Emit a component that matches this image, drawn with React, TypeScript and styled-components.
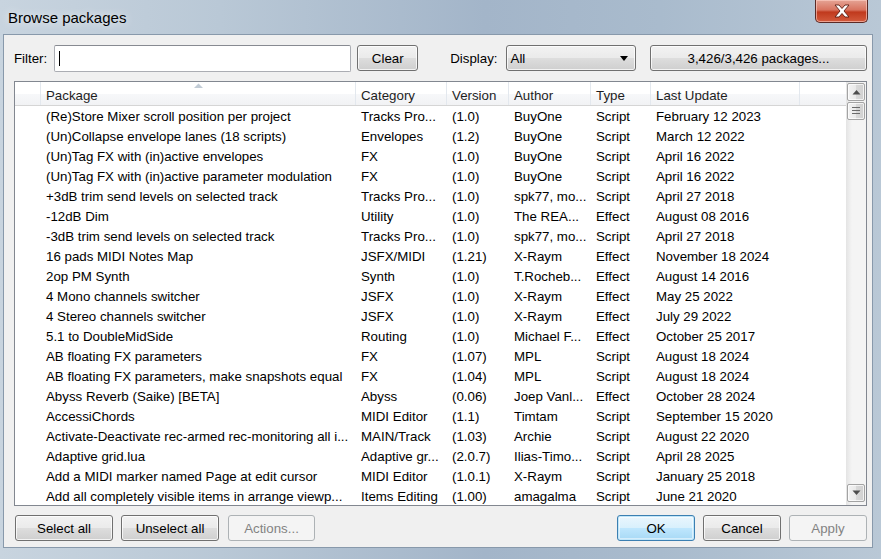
import React from "react";
import styled, { createGlobalStyle, css } from "styled-components";

type Pkg = [string, string, string, string, string, string];

const rows: Pkg[] = [
  ["(Re)Store Mixer scroll position per project", "Tracks Pro...", "(1.0)", "BuyOne", "Script", "February 12 2023"],
  ["(Un)Collapse envelope lanes (18 scripts)", "Envelopes", "(1.2)", "BuyOne", "Script", "March 12 2022"],
  ["(Un)Tag FX with (in)active envelopes", "FX", "(1.0)", "BuyOne", "Script", "April 16 2022"],
  ["(Un)Tag FX with (in)active parameter modulation", "FX", "(1.0)", "BuyOne", "Script", "April 16 2022"],
  ["+3dB trim send levels on selected track", "Tracks Pro...", "(1.0)", "spk77, mo...", "Script", "April 27 2018"],
  ["-12dB Dim", "Utility", "(1.0)", "The REA...", "Effect", "August 08 2016"],
  ["-3dB trim send levels on selected track", "Tracks Pro...", "(1.0)", "spk77, mo...", "Script", "April 27 2018"],
  ["16 pads MIDI Notes Map", "JSFX/MIDI", "(1.21)", "X-Raym", "Effect", "November 18 2024"],
  ["2op PM Synth", "Synth", "(1.0)", "T.Rocheb...", "Effect", "August 14 2016"],
  ["4 Mono channels switcher", "JSFX", "(1.0)", "X-Raym", "Effect", "May 25 2022"],
  ["4 Stereo channels switcher", "JSFX", "(1.0)", "X-Raym", "Effect", "July 29 2022"],
  ["5.1 to DoubleMidSide", "Routing", "(1.0)", "Michael F...", "Effect", "October 25 2017"],
  ["AB floating FX parameters", "FX", "(1.07)", "MPL", "Script", "August 18 2024"],
  ["AB floating FX parameters, make snapshots equal", "FX", "(1.04)", "MPL", "Script", "August 18 2024"],
  ["Abyss Reverb (Saike) [BETA]", "Abyss", "(0.06)", "Joep Vanl...", "Effect", "October 28 2024"],
  ["AccessiChords", "MIDI Editor", "(1.1)", "Timtam", "Script", "September 15 2020"],
  ["Activate-Deactivate rec-armed rec-monitoring all i...", "MAIN/Track", "(1.03)", "Archie", "Script", "August 22 2020"],
  ["Adaptive grid.lua", "Adaptive gr...", "(2.0.7)", "Ilias-Timo...", "Script", "April 28 2025"],
  ["Add a MIDI marker named Page at edit cursor", "MIDI Editor", "(1.0.1)", "X-Raym", "Script", "January 25 2018"],
  ["Add all completely visible items in arrange viewp...", "Items Editing", "(1.00)", "amagalma", "Script", "June 21 2020"],
];

const headers = ["Package", "Category", "Version", "Author", "Type", "Last Update"];
const COLS = "26px 315px 91px 62px 82px 60px 149px 1fr";

const Global = createGlobalStyle`
  html, body { margin: 0; padding: 0; background: #9fb3c8; }
  body { font-family: "Liberation Sans", Arial, sans-serif; font-size: 13px; color: #000; }
`;

const Window = styled.div`
  width: 881px;
  height: 559px;
  display: flex;
  flex-direction: column;
  background: linear-gradient(90deg, #c8d4df 0%, #b9c8d6 25%, #a3b5c9 55%, #a9bbcd 75%, #b9c8d6 100%);
  overflow: hidden;
`;

const TitleBar = styled.div`
  height: 34px;
  flex: none;
  display: flex;
  align-items: flex-start;
  justify-content: space-between;
  padding: 0 13px 0 8px;
  box-sizing: border-box;
`;

const Title = styled.div`
  font-family: "Liberation Sans", Arial, sans-serif;
  font-size: 15px;
  color: #000;
  margin-top: 9px;
  text-shadow: 0 0 8px rgba(255, 255, 255, 0.9);
`;

const CloseBtn = styled.div`
  width: 51px;
  height: 22px;
  border: 1px solid #5b2a25;
  border-top: none;
  border-radius: 0 0 5px 5px;
  background: linear-gradient(180deg, #e5a495 0%, #d8735f 45%, #c0391d 55%, #d35b3d 100%);
  box-shadow: inset 0 0 0 1px rgba(255, 210, 200, 0.6);
  display: flex;
  align-items: center;
  justify-content: center;
`;

const Client = styled.div`
  flex: 1;
  margin: 0 8px 11px 3px;
  background: #f0f0f0;
  border: 1px solid #8899ab;
  display: flex;
  flex-direction: column;
  padding: 9px 5px 0 10px;
  box-sizing: border-box;
`;

const Toolbar = styled.div`
  display: flex;
  align-items: center;
  height: 28px;
`;

const Label = styled.span<{ $ml?: number; $mr?: number }>`
  margin-left: ${(p) => p.$ml ?? 0}px;
  margin-right: ${(p) => p.$mr ?? 5}px;
  font-size: 13.3px;
`;

const TextBox = styled.div`
  width: 297px;
  height: 27px;
  box-sizing: border-box;
  background: #fff;
  border: 1px solid #abadb3;
  border-top-color: #878a91;
  border-radius: 2px;
  display: flex;
  align-items: center;
  padding-left: 4px;
`;

const Caret = styled.div`
  width: 1px;
  height: 15px;
  background: #000;
`;

const buttonFace = css`
  box-sizing: border-box;
  height: 26px;
  border: 1px solid #707070;
  border-radius: 3px;
  background: linear-gradient(180deg, #f2f2f2 0%, #ebebeb 48%, #dddddd 52%, #cfcfcf 100%);
  box-shadow: inset 0 0 0 1px rgba(255, 255, 255, 0.75);
  font-family: "Liberation Sans", Arial, sans-serif;
  font-size: 13.3px;
  color: #000;
  padding: 0;
`;

const Button = styled.button<{ $w: number; $ml?: number; $variant?: "default" | "disabled" }>`
  ${buttonFace};
  width: ${(p) => p.$w}px;
  margin-left: ${(p) => p.$ml ?? 0}px;
  ${(p) =>
    p.$variant === "default" &&
    css`
      border-color: #3c7fb1;
      box-shadow: inset 0 0 0 1px #bfe6fa, inset 0 0 0 2px rgba(255, 255, 255, 0.5);
      background: linear-gradient(180deg, #eaf6fd 0%, #d9f0fc 48%, #bee6fd 52%, #a7d9f5 100%);
    `}
  ${(p) =>
    p.$variant === "disabled" &&
    css`
      border-color: #adb2b5;
      background: #f4f4f4;
      box-shadow: none;
      color: #838383;
    `}
`;

const Combo = styled.div`
  ${buttonFace};
  width: 130px;
  display: flex;
  align-items: center;
  justify-content: space-between;
  padding: 0 7px 0 4px;
`;

const Arrow = styled.div`
  width: 0;
  height: 0;
  border-left: 4px solid transparent;
  border-right: 4px solid transparent;
  border-top: 5px solid #000;
`;

const Spacer = styled.div`
  flex: 1;
`;

const ListBox = styled.div`
  margin-top: 9px;
  height: 425px;
  box-sizing: border-box;
  border: 1px solid #828790;
  background: #fff;
  display: flex;
  position: relative;
`;

const ListInner = styled.div`
  flex: 1;
  display: flex;
  flex-direction: column;
  overflow: hidden;
`;

const HeaderRow = styled.div`
  display: grid;
  grid-template-columns: ${COLS};
  height: 23px;
  flex: none;
  background: linear-gradient(180deg, #ffffff 0%, #ffffff 50%, #f7f8fa 51%, #f1f2f4 100%);
  border-bottom: 1px solid #d5d5d5;
`;

const HeaderCell = styled.div<{ $last?: boolean }>`
  position: relative;
  border-right: ${(p) => (p.$last ? "none" : "1px solid #e3e8ee")};
  padding-left: 5px;
  display: flex;
  align-items: center;
  padding-top: 3px;
  font-size: 13.3px;
  color: #1e1e1e;
  white-space: nowrap;
`;

const SortMark = styled.svg`
  position: absolute;
  top: 1px;
  left: 50%;
  margin-left: -4px;
`;

const Row = styled.div`
  display: grid;
  grid-template-columns: ${COLS};
  height: 20px;
  flex: none;
  align-items: center;
`;

const Cell = styled.div`
  padding-left: 5px;
  white-space: nowrap;
  overflow: hidden;
  font-size: 13.3px;
  color: #000;
`;

const ScrollBar = styled.div`
  width: 20px;
  flex: none;
  display: flex;
  flex-direction: column;
  background: linear-gradient(90deg, #e4e4e4 0%, #f4f4f4 30%, #f4f4f4 100%);
  padding: 1px 1px 2px 1px;
  box-sizing: border-box;
`;

const SbButton = styled.div<{ $h: number }>`
  height: ${(p) => p.$h}px;
  box-sizing: border-box;
  border: 1px solid #a3a3a3;
  border-radius: 2px;
  background: linear-gradient(90deg, #f3f3f3 0%, #e9e9e9 50%, #d9d9d9 51%, #d0d0d0 100%);
  box-shadow: inset 0 0 0 1px rgba(255, 255, 255, 0.7);
  display: flex;
  align-items: center;
  justify-content: center;
  margin-bottom: 1px;
`;

const Footer = styled.div`
  display: flex;
  align-items: center;
  height: 26px;
  margin-top: 9px;
`;

const Glyph = ({ d }: { d: string }) => (
  <svg width="9" height="6" viewBox="0 0 9 6">
    <path d={d} fill="#4d4d4d" />
  </svg>
);

const Grip = () => (
  <svg width="8" height="8" viewBox="0 0 8 8">
    {[0.5, 3.5, 6.5].map((y) => (
      <line key={y} x1="0" x2="8" y1={y} y2={y} stroke="#6b6b6b" strokeWidth="1" />
    ))}
  </svg>
);

export default function App() {
  return (
    <>
      <Global />
      <Window>
        <TitleBar>
          <Title>Browse packages</Title>
          <CloseBtn>
            <svg width="18" height="14" viewBox="0 0 18 14">
              <path
                d="M2 1 L6 1 L9 4.5 L12 1 L16 1 L11 7 L16 13 L12 13 L9 9.5 L6 13 L2 13 L7 7 Z"
                fill="#ffffff"
                stroke="#5b1d12"
                strokeWidth="0.9"
                strokeLinejoin="round"
              />
            </svg>
          </CloseBtn>
        </TitleBar>
        <Client>
          <Toolbar>
            <Label $mr={7}>Filter:</Label>
            <TextBox>
              <Caret />
            </TextBox>
            <Button $w={61} $ml={6}>Clear</Button>
            <Label $ml={32} $mr={8}>Display:</Label>
            <Combo>
              <span>All</span>
              <Arrow />
            </Combo>
            <Spacer />
            <Button $w={217}>3,426/3,426 packages...</Button>
          </Toolbar>
          <ListBox>
            <ListInner>
              <HeaderRow>
                <HeaderCell />
                {headers.map((h, i) => (
                  <HeaderCell key={h}>
                    {i === 0 && (
                      <SortMark width="9" height="5" viewBox="0 0 9 5">
                        <path d="M0 5 L4.5 0.5 L9 5 Z" fill="#c2ccd6" />
                      </SortMark>
                    )}
                    {h}
                  </HeaderCell>
                ))}
                <HeaderCell $last />
              </HeaderRow>
              {rows.map((r) => (
                <Row key={r[0]}>
                  <Cell />
                  {r.map((v, i) => (
                    <Cell key={i}>{v}</Cell>
                  ))}
                </Row>
              ))}
            </ListInner>
            <ScrollBar>
              <SbButton $h={18}>
                <Glyph d="M0.5 5.5 L4.5 1 L8.5 5.5 Z" />
              </SbButton>
              <SbButton $h={18}>
                <Grip />
              </SbButton>
              <Spacer />
              <SbButton $h={18}>
                <Glyph d="M0.5 0.5 L4.5 5 L8.5 0.5 Z" />
              </SbButton>
            </ScrollBar>
          </ListBox>
          <Footer>
            <Button $w={98} $ml={1}>Select all</Button>
            <Button $w={98} $ml={8}>Unselect all</Button>
            <Button $w={87} $ml={9} $variant="disabled">Actions...</Button>
            <Spacer />
            <Button $w={78} $variant="default">OK</Button>
            <Button $w={78} $ml={8}>Cancel</Button>
            <Button $w={78} $ml={8} $variant="disabled">Apply</Button>
          </Footer>
        </Client>
      </Window>
    </>
  );
}
